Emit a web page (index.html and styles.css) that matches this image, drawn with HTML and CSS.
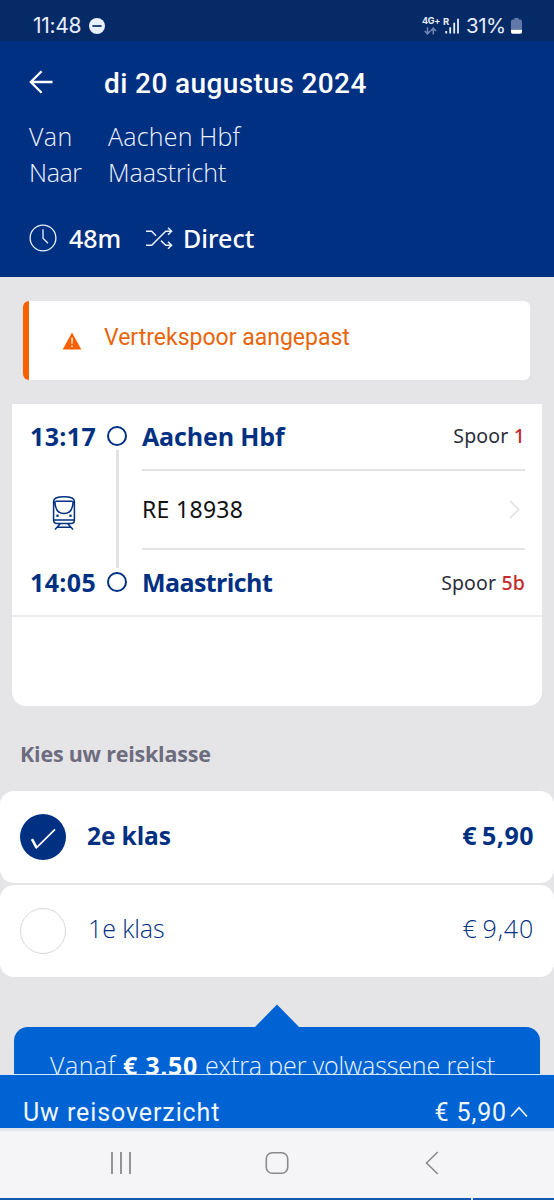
FILE: index.html
```html
<!DOCTYPE html>
<html lang="nl">
<head>
<meta charset="utf-8">
<title>Reisdetails</title>
<link rel="stylesheet" href="styles.css">
</head>
<body>
<div class="screen">
  <div class="statusbar">
    <span class="clock">11:48</span>
    <svg class="dnd" width="16" height="16" viewBox="0 0 16 16"><circle cx="8" cy="8" r="8" fill="#eaf0fc"/><path d="M3.4 8h9.2" stroke="#062a66" stroke-width="1.7"/></svg>
    <div class="network">
      <span class="net-type">4G+</span>
      <svg width="13" height="8" viewBox="0 0 13 8" fill="none" stroke="#6f86b4" stroke-width="1.5"><path d="M3.5 0.3v6.4M0.8 4l2.7 2.8L6.2 4M9.3 7.6V1.2M6.6 4l2.7-2.8L12 4"/></svg>
    </div>
    <div class="signal">
      <span class="roaming">R</span>
      <svg width="16" height="16" viewBox="0 0 16 16" fill="#e6edfb"><path d="M1.3 13h1.8v2.4H1.3zM5.3 9.2h1.8v6.2H5.3zM9.3 4.8h1.8v10.600H9.300zM13.100.8h1.800v14.600h-1.800z"/></svg>
    </div>
    <span class="battery-pct">31%</span>
    <svg class="battery" width="11" height="16" viewBox="0 0 11 16"><path d="M3.3 0h4.4v1.6h1.6Q11 1.8 11 3.4v8.4H0V3.4Q0 1.8 1.7 1.6h1.6z" fill="#6178a8"/><path d="M0 11.7h11v2.4q0 1.6-1.6 1.6H1.6Q0 15.700 0 14.100z" fill="#fff"/></svg>
  </div>

  <header class="header">
    <div class="titlebar">
      <svg class="back" width="24" height="24" viewBox="0 0 24 24" fill="none" stroke="#fff" stroke-width="2.300"><path d="M23.500 12H1.800M12.600 1.200L1.800 12l10.800 10.800"/></svg>
      <h1 class="title">di 20 augustus 2024</h1>
    </div>
    <div class="route"><span class="route-label van">Van</span><span class="route-value from">Aachen Hbf</span></div>
    <div class="route"><span class="route-label naar">Naar</span><span class="route-value">Maastricht</span></div>
    <div class="summary">
      <svg width="28" height="28" viewBox="0 0 28 28" fill="none" stroke="#e9f1ff" stroke-width="1.300"><circle cx="14" cy="14" r="12.900"/><path d="M14 5.200v9l5 5"/></svg>
      <span class="duration">48m</span>
      <svg width="28" height="22" viewBox="0 0 28 22" fill="none" stroke="#e9f1ff" stroke-width="1.500"><path d="M1 4.300h5.700l4.300 4.400M1 18.300h5.700L20.700 4.300h5.800M16 13.600l4.700 4.700h5.800M23 .8l3.600 3.500L23 7.800M23 14.800l3.600 3.500-3.600 3.500"/></svg>
      <span class="transfers">Direct</span>
    </div>
  </header>

  <main class="content">
    <section class="alert">
      <svg class="warn" width="20" height="18" viewBox="0 0 20 18"><path d="M10 .6L19.300 17.400H.7z" fill="#f86000"/><path d="M9.200 5.700h1.700l-.3 6.200H9.500zM9.100 13.400h1.800v1.700H9.100z" fill="#ffe8d8"/></svg>
      <span class="alert-text">Vertrekspoor aangepast</span>
    </section>

    <section class="journey">
      <div class="legs">
        <div class="times">
          <span class="time">13:17</span>
          <svg width="24" height="36" viewBox="0 0 24 36" fill="none" stroke="#003082" stroke-width="1.500"><path d="M1.600 25.500V6.500Q1.600 1.800 12 1.800t10.400 4.700v19Q22.400 28.500 19 28.500H5Q1.600 28.500 1.600 25.500zM3.500 6.300h17M3 6.300C3 15 6.500 18.500 12 18.500S21 15 21 6.300M2 25h20M8.400 28.500L3 34.400M15.600 28.500L21 34.400M5.500 32.200h13"/><circle cx="5.500" cy="20.800" r="1.300" fill="#003082" stroke="none"/><circle cx="18.500" cy="20.800" r="1.300" fill="#003082" stroke="none"/></svg>
          <span class="time">14:05</span>
        </div>
        <div class="track"><i class="stop"></i><i class="rail"></i><i class="stop"></i></div>
        <div class="details">
          <div class="station-row"><span class="station">Aachen Hbf</span><span class="platform">Spoor <b>1</b></span></div>
          <div class="train-row"><span class="train">RE 18938</span><svg width="12" height="19" viewBox="0 0 12 19" fill="none" stroke="#e2e2e4" stroke-width="1.600"><path d="M1.200 1.200L9.800 9.500 1.200 17.800"/></svg></div>
          <div class="station-row arrival"><span class="station maas">Maastricht</span><span class="platform">Spoor <b>5b</b></span></div>
        </div>
      </div>
    </section>

    <h2 class="section-title">Kies uw reisklasse</h2>
    <div class="class-row">
      <svg width="46" height="46" viewBox="0 0 46 46" fill="none"><circle cx="23" cy="23" r="23" fill="#003082"/><path d="M12.200 25.500l4.400 8L35 15.400" stroke="#fff" stroke-width="1.700"/><path d="M12 25.200l4.600 8.600" stroke="#fff" stroke-width="2.500"/></svg>
      <span class="class-name chosen">2e klas</span>
      <span class="price chosen-price"><span>€</span><span>5,90</span></span>
    </div>
    <div class="class-row second">
      <i class="radio"></i>
      <span class="class-name">1e klas</span>
      <span class="price"><span>€</span><span>9,40</span></span>
    </div>

    <section class="promo-area">
      <svg width="46" height="24" viewBox="0 0 46 24"><path d="M23 .5L46 24H0z" fill="#0063d3"/></svg>
      <div class="promo"><span class="promo-vanaf">Vanaf</span><b>€ 3,50</b><span class="promo-rest">extra per volwassene reist</span></div>
    </section>
  </main>

  <div class="overview">
    <span class="overview-label">Uw reisoverzicht</span>
    <span class="overview-price">€ 5,90</span>
    <svg width="18" height="12" viewBox="0 0 18 12" fill="none" stroke="#f1f7ff" stroke-width="1.600"><path d="M1 10.500L9 1.800l8 8.700"/></svg>
  </div>
  <nav class="navbar">
    <svg width="24" height="24" viewBox="0 0 24 24" stroke="#8b8b8e" stroke-width="1.800"><path d="M3 1v22M12 1v22M21 1v22"/></svg>
    <svg width="24" height="24" viewBox="0 0 24 24" fill="none" stroke="#8b8b8e" stroke-width="1.600"><rect x="1.300" y="1.700" width="21.400" height="20.600" rx="6"/></svg>
    <svg width="24" height="24" viewBox="0 0 24 24" fill="none" stroke="#8b8b8e" stroke-width="1.600"><path d="M17.800 1L6.500 12l11.300 11"/></svg>
  </nav>
  <div class="edge"><i></i></div>
</div>
</body>
</html>
```
FILE: styles.css
```css
* { box-sizing: border-box; margin: 0; }
body { font-family: "Open Sans", "Noto Sans", sans-serif; background: #e5e5e8; }
svg, i { display: block; flex: none; }
span, b, h1, h2 { white-space: nowrap; }
.screen { width: 554px; height: 1200px; display: flex; flex-direction: column; overflow: hidden; }

.statusbar { height: 41px; flex: none; background: #062a66; color: #e6edfb; display: flex; align-items: center; padding: 10px 32px 0 33px; }
.clock { font: 400 21px/30px Inter, sans-serif; width: 56px; letter-spacing: -0.300px; }
.network { margin-left: 316px; width: 20px; height: 17px; display: flex; flex-direction: column; align-items: center; gap: 2px; }
.net-type { font: 700 9px/8px Inter, sans-serif; letter-spacing: -0.300px; }
.network svg { margin-left: -1px; }
.signal { position: relative; width: 22px; padding-left: 3px; }
.roaming { position: absolute; left: 2px; top: 0; font: 700 9.500px/8px Inter, sans-serif; }
.battery-pct { font: 400 20.500px/30px Inter, sans-serif; margin-left: 3px; width: 42px; letter-spacing: -0.500px; }
.battery { margin-left: auto; }

.header { height: 236px; flex: none; background: #003082; color: #fff; padding: 22px 0 0 29px; }
.titlebar { height: 40px; display: flex; align-items: center; }
.back { margin-top: -2px; }
.title { font: 500 28px/40px Roboto, sans-serif; letter-spacing: 0.400px; margin: 1px 0 0 51px; }
.route { display: flex; font-size: 25px; font-weight: 340; line-height: 36px; color: #eff4ff; letter-spacing: 0; }
.titlebar + .route { margin-top: 15px; }
.route-label { width: 79px; }
.van { letter-spacing: 0.400px; }
.naar { letter-spacing: -0.400px; }
.from { letter-spacing: 0.200px; }
.summary { display: flex; align-items: center; height: 36px; margin-top: 30px; font: 500 25px/36px "Noto Sans", sans-serif; }
.duration { width: 53px; margin: 0 23px 0 12px; }
.transfers { margin-left: 10px; }

.content { flex: none; height: 797px; overflow: hidden; background: #e5e5e8; }
.alert { margin: 24px 24px 0 23px; height: 79px; background: #fff; border-left: 6px solid #f86000; border-radius: 6px; display: flex; }
.warn { margin: 31px 0 0 33px; }
.alert-text { font: 400 23px/36px Roboto, sans-serif; color: #e8650c; margin: 19px 0 0 22px; }

.journey { margin: 24px 12px 0; height: 302px; background: #fff; border-radius: 0 0 14px 14px; }
.legs { height: 213px; border-bottom: 2px solid #eeeef0; padding: 14px 17px 0 18px; display: flex; }
.times { width: 76px; height: 182px; display: flex; flex-direction: column; justify-content: space-between; color: #003082; }
.times svg { margin: 7px 0 0 22px; }
.time { font-size: 25px; font-weight: 700; line-height: 36px; letter-spacing: 0.350px; }
.track { width: 22px; display: flex; flex-direction: column; align-items: center; padding-top: 8px; height: 174px; }
.stop { width: 20px; height: 20px; border: 2.500px solid #003082; border-radius: 50%; }
.rail { width: 3px; flex: 1; margin: 4px 0 4px; background: #e2e2e4; }
.details { flex: 1; margin-left: 14px; }
.station-row { display: flex; justify-content: space-between; height: 51px; line-height: 36px; }
.station { font-size: 25px; font-weight: 700; color: #003082; letter-spacing: -0.150px; }
.maas { letter-spacing: -0.600px; }
.platform { font: 400 19.500px/36px "Noto Sans", sans-serif; letter-spacing: 0.150px; color: #2b2c3a; }
.platform b { font-weight: 500; color: #c42a2a; }
.train-row { height: 81px; border-top: 2px solid #e3e3e5; border-bottom: 2px solid #e3e3e5; display: flex; align-items: center; justify-content: space-between; padding-right: 4px; }
.train { font: 400 23px/36px "Noto Sans", sans-serif; color: #111; letter-spacing: 0.300px; padding-bottom: 1px; }
.arrival { padding-top: 14px; }
.arrival .platform { padding-top: 1px; }

.section-title { font-size: 21.500px; font-weight: 700; line-height: 36px; color: #6d6c7e; letter-spacing: -0.220px; margin: 30px 0 0 20px; }
.class-row { height: 92px; margin-top: 19px; background: #fff; border-radius: 14px; display: flex; align-items: center; padding: 0 20px; color: #003082; }
.second { margin-top: 2px; }
.radio { width: 46px; height: 46px; border: 1.500px solid #d8d8da; border-radius: 50%; }
.class-name { margin-left: 22px; font-size: 25px; font-weight: 340; line-height: 36px; padding-bottom: 6px; letter-spacing: -0.100px; }
.chosen { margin-left: 21px; font-size: 24.500px; font-weight: 700; padding-bottom: 3px; letter-spacing: -0.100px; }
.price { margin-left: auto; display: flex; gap: 5px; font-size: 25px; font-weight: 340; line-height: 36px; padding-bottom: 6px; letter-spacing: 0.800px; }
.chosen-price { font-weight: 700; letter-spacing: 0.500px; padding-bottom: 4px; }
.promo-area { margin: 27px 14px 0; display: flex; flex-direction: column; align-items: center; }
.promo-area svg { margin-bottom: -1px; }
.promo { width: 526px; height: 80px; background: #0063d3; border-radius: 14px; color: #eaf3ff; display: flex; font-size: 25px; font-weight: 340; line-height: 36px; padding: 20px 0 0 36px; }
.promo b { font-weight: 700; color: #fff; letter-spacing: 0.700px; width: 82px; }
.promo-vanaf { width: 73px; letter-spacing: 0.500px; }
.promo-rest { letter-spacing: -0.120px; }

.overview { height: 54px; flex: none; border-top: 1.500px solid #d5e6f8; background: #0063d3; color: #f1f7ff; display: flex; align-items: center; padding: 22px 26px 0 23px; font: 400 25px/36px Roboto, sans-serif; }
.overview-label { letter-spacing: 0.900px; }
.overview-price { margin-left: auto; letter-spacing: 0.850px; margin-right: 3px; }
.overview svg { margin-top: -2px; }
.navbar { height: 70px; flex: none; border-top: 3px solid #e2e5eb; background: #f5f5f8; display: flex; align-items: center; padding: 0 110px 3px 109px; justify-content: space-between; }
.edge { height: 2px; flex: none; background: #1258ae; padding-left: 471px; }
.edge i { width: 2px; height: 2px; background: #d5e6f8; }
```
